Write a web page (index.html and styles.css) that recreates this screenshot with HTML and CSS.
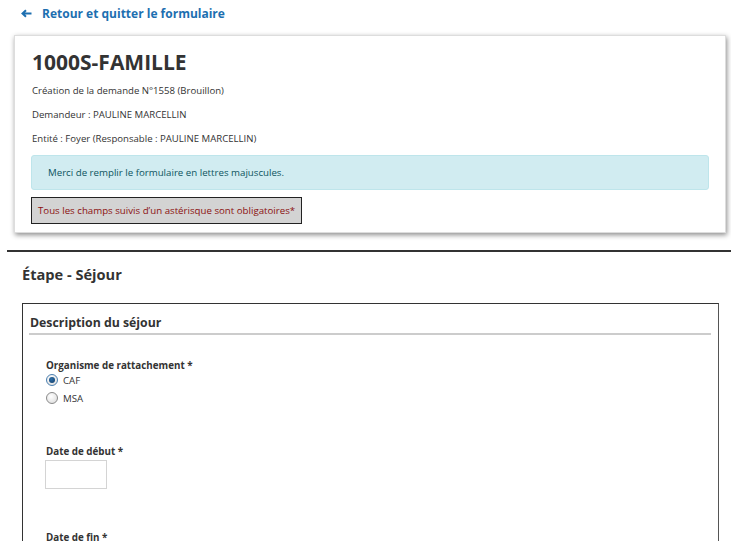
FILE: index.html
```html
<!DOCTYPE html>
<html lang="fr">
<head>
<meta charset="utf-8">
<title>1000S-FAMILLE</title>
<link rel="stylesheet" href="styles.css">
</head>
<body>
<div class="page">
  <a class="back" href="#"><svg class="arrow" width="11" height="9" viewBox="0 0 11 9"><path d="M10.5 4.5H2M5 1.2L1.5 4.5L5 7.8" fill="none" stroke="#1d6fb0" stroke-width="2"/></svg><span>Retour et quitter le formulaire</span></a>
  <div class="card">
    <h1 class="title">1000S-FAMILLE</h1>
    <p class="meta">Création de la demande N°1558 (Brouillon)</p>
    <p class="meta">Demandeur : PAULINE MARCELLIN</p>
    <p class="meta">Entité : Foyer (Responsable : PAULINE MARCELLIN)</p>
    <div class="info">Merci de remplir le formulaire en lettres majuscules.</div>
    <div class="required">Tous les champs suivis d’un astérisque sont obligatoires*</div>
  </div>
  <hr class="sep">
  <h2 class="step">Étape - Séjour</h2>
  <div class="fieldset">
    <div class="legend">Description du séjour</div>
    <div class="field first">
      <div class="label">Organisme de rattachement *</div>
      <div class="radio"><span class="dot checked"></span><span>CAF</span></div>
      <div class="radio"><span class="dot"></span><span>MSA</span></div>
    </div>
    <div class="field date">
      <div class="label">Date de début *</div>
      <div class="input"></div>
    </div>
    <div class="field end">
      <div class="label">Date de fin *</div>
    </div>
  </div>
</div>
</body>
</html>
```
FILE: styles.css
```css
html, body {
  margin: 0;
  padding: 0;
  background: #fff;
  font-family: "Open Sans", "Noto Sans", sans-serif;
  color: #333;
  overflow: hidden;
}
.page {
  padding-top: 4px;
}
.back {
  display: flex;
  align-items: center;
  gap: 10px;
  margin-left: 21px;
  height: 18px;
  color: #1d6fb0;
  font-weight: 700;
  font-size: 12px;
  text-decoration: none;
}
.back .arrow {
  display: block;
}
.card {
  margin: 13px 0 0 14px;
  width: 678px;
  padding: 12px 16px 8px 16px;
  border: 1px solid #ddd;
  background: #fff;
  box-shadow: 1px 2px 5px rgba(0, 0, 0, 0.45);
}
.title {
  margin: 0 0 3px 1px;
  font-size: 21px;
  line-height: 28px;
  font-weight: 700;
  color: #333;
}
.meta {
  margin: 0 0 0 1px;
  font-size: 9.6px;
  line-height: 24px;
  color: #333;
}
.info {
  margin-top: 4px;
  height: 33px;
  line-height: 33px;
  padding-left: 16px;
  background: #d1ecf1;
  border: 1px solid #bee5eb;
  border-radius: 3px;
  color: #0c5460;
  font-size: 9.7px;
}
.required {
  display: inline-block;
  margin-top: 7px;
  height: 25px;
  line-height: 25px;
  padding: 0 6px;
  background: #d3d3d3;
  border: 1px solid #222;
  color: #8b1010;
  font-size: 9.7px;
}
.sep {
  margin: 17px 0 0 7px;
  border: 0;
  border-top: 2px solid #333;
}
.step {
  margin: 12px 0 0 22px;
  font-size: 14.6px;
  line-height: 20px;
  font-weight: 700;
  color: #333;
}
.fieldset {
  margin: 19px 0 0 22px;
  width: 682px;
  height: 300px;
  border: 1px solid #333;
  border-right-color: #555;
  padding: 0 7px 0 6px;
}
.legend {
  margin-top: 10px;
  padding-left: 1px;
  font-size: 12.3px;
  line-height: 18px;
  font-weight: 700;
  color: #333;
  padding-bottom: 1px;
  border-bottom: 2px solid #ccc;
}
.field {
  padding-left: 17px;
}
.field.first {
  margin-top: 24px;
}
.label {
  font-size: 9.8px;
  font-weight: 700;
  line-height: 14px;
  color: #333;
}
.radio {
  display: flex;
  align-items: center;
  gap: 5px;
  height: 18px;
  font-size: 9.7px;
  color: #333;
}
.label + .radio { margin-top: -2px; }
.dot {
  width: 10px;
  height: 10px;
  border-radius: 50%;
  border: 1px solid #8a8a8a;
  background: radial-gradient(circle at 40% 35%, #fff 0%, #e4e4e4 70%, #cfcfcf 100%);
  position: relative;
}
.dot.checked {
  border-color: #4a7fb0;
}
.dot.checked::after {
  content: "";
  position: absolute;
  left: 2px;
  top: 2px;
  width: 6px;
  height: 6px;
  border-radius: 50%;
  background: radial-gradient(circle at 40% 35%, #2d6ea8 0%, #123c66 100%);
}
.field.date {
  margin-top: 38px;
}
.input {
  margin-top: 1px;
  width: 60px;
  height: 27px;
  border: 1px solid #d4d4d4;
  margin-left: -1px;
}
.field.end {
  margin-top: 42px;
}
```
